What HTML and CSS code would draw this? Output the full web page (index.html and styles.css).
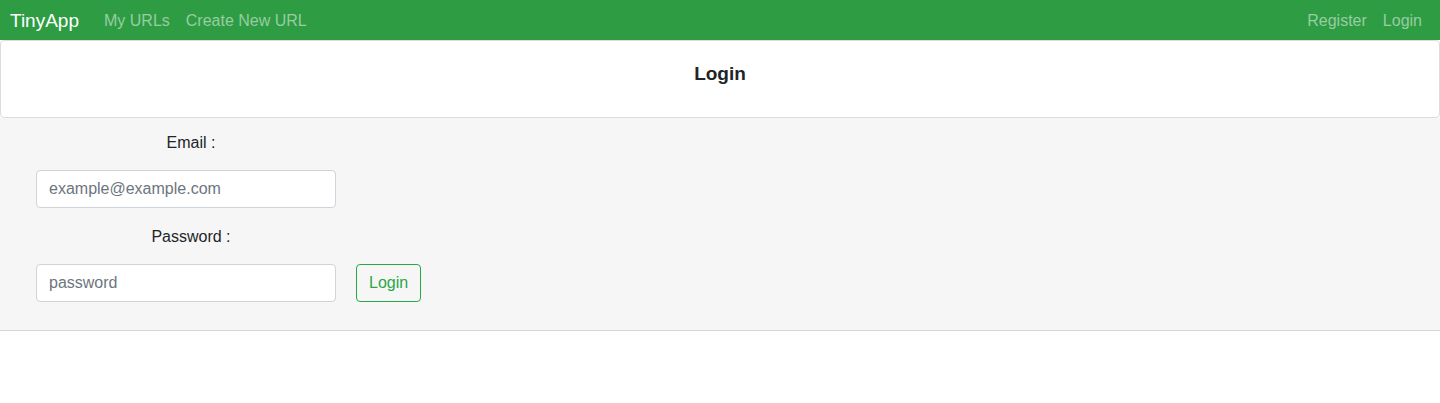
FILE: index.html
```html
<!DOCTYPE html>
<html lang="en">
<head>
<meta charset="utf-8">
<title>TinyApp - Login</title>
<link rel="stylesheet" href="styles.css">
</head>
<body>
<nav class="navbar">
  <a class="brand" href="#">TinyApp</a>
  <div class="nav-left">
    <a class="nav-link" href="#">My URLs</a>
    <a class="nav-link" href="#">Create New URL</a>
  </div>
  <div class="nav-right">
    <a class="nav-link" href="#">Register</a>
    <a class="nav-link" href="#">Login</a>
  </div>
</nav>
<main class="page">
  <div class="card">
    <h5 class="card-title">Login</h5>
  </div>
  <form class="login-form">
    <label class="field-label" for="email">Email :</label>
    <div class="field-row">
      <input class="form-control" id="email" type="text" placeholder="example@example.com">
    </div>
    <label class="field-label" for="password">Password :</label>
    <div class="field-row">
      <input class="form-control" id="password" type="password" placeholder="password">
      <button class="btn-outline" type="submit">Login</button>
    </div>
  </form>
</main>
</body>
</html>
```
FILE: styles.css
```css
* { box-sizing: border-box; }
html, body {
  margin: 0;
  padding: 0;
  background: #fff;
  font-family: "Liberation Sans", Arial, sans-serif;
  font-size: 16px;
  line-height: 24px;
  color: #212529;
}
a { text-decoration: none; }

.navbar {
  height: 40px;
  background: #2d9c43;
  display: flex;
  align-items: center;
  padding: 1px 10px 0;
}
.brand {
  color: #fff;
  font-size: 19px;
  line-height: 24px;
  margin-right: 17px;
}
.nav-left, .nav-right {
  display: flex;
  align-items: center;
}
.nav-right { margin-left: auto; }
.nav-link {
  color: rgba(255, 255, 255, 0.5);
  padding: 0 8px;
  font-size: 16px;
}

.card {
  background: #fff;
  border: 1px solid #dcdcdc;
  border-radius: 4px;
  text-align: center;
  padding: 21px 20px 30px;
  height: 78px;
}
.card-title {
  margin: 0;
  font-size: 19px;
  font-weight: 600;
  line-height: 24px;
  color: #212529;
}

.login-form {
  background: #f6f6f6;
  border-bottom: 1px solid #d6d6d6;
  padding: 13px 36px 27px;
  display: flex;
  flex-direction: column;
  align-items: flex-start;
  height: 213px;
}
.field-label {
  display: block;
  width: 310px;
  text-align: center;
  line-height: 24px;
  margin-bottom: 15px;
}
.field-row {
  display: flex;
  align-items: center;
  gap: 20px;
  margin-bottom: 17px;
}
.field-row:last-child { margin-bottom: 0; }
.form-control {
  width: 300px;
  height: 38px;
  padding: 6px 12px;
  font-family: inherit;
  font-size: 16px;
  color: #495057;
  background: #fff;
  border: 1px solid #ced4da;
  border-radius: 4px;
  outline: none;
}
.form-control::placeholder { color: #6c757d; opacity: 1; }
.btn-outline {
  height: 38px;
  padding: 6px 12px;
  font-family: inherit;
  font-size: 16px;
  line-height: 24px;
  color: #28a745;
  background: transparent;
  border: 1px solid #28a745;
  border-radius: 4px;
  cursor: pointer;
}
```
